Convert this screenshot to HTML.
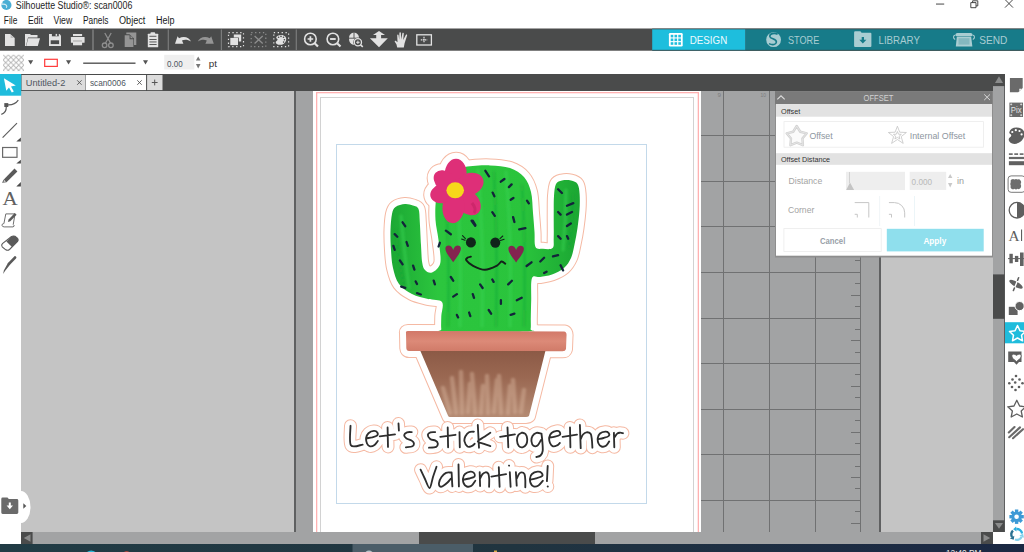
<!DOCTYPE html>
<html><head><meta charset="utf-8">
<style>
*{margin:0;padding:0}
html,body{width:1024px;height:552px;overflow:hidden;background:#fff}
svg{position:absolute;left:0;top:0;font-family:"Liberation Sans",sans-serif}
</style></head><body>
<svg width="1024" height="552" viewBox="0 0 1024 552">
<!-- canvas -->
<rect x="21" y="91" width="972" height="441" fill="#c4c4c4"/>
<rect x="294" y="91" width="2" height="441" fill="#5f6061"/>
<rect x="296" y="91" width="583" height="441" fill="#a2a3a4"/>
<rect x="879" y="91" width="2" height="441" fill="#5f6061"/>
<g fill="#707172"><rect x="723" y="91" width="1" height="441"/><rect x="769" y="91" width="1" height="441"/><rect x="815" y="91" width="1" height="441"/><rect x="860" y="91" width="1" height="441"/><rect x="701" y="135" width="160" height="1"/><rect x="701" y="181" width="160" height="1"/><rect x="701" y="226" width="160" height="1"/><rect x="701" y="272" width="160" height="1"/><rect x="701" y="318" width="160" height="1"/><rect x="701" y="363" width="160" height="1"/><rect x="701" y="409" width="160" height="1"/><rect x="701" y="454" width="160" height="1"/><rect x="701" y="500" width="160" height="1"/><rect x="855" y="101" width="6" height="1"/><rect x="851" y="112" width="10" height="1"/><rect x="855" y="124" width="6" height="1"/><rect x="855" y="146" width="6" height="1"/><rect x="851" y="158" width="10" height="1"/><rect x="855" y="169" width="6" height="1"/><rect x="855" y="192" width="6" height="1"/><rect x="851" y="204" width="10" height="1"/><rect x="855" y="215" width="6" height="1"/><rect x="855" y="238" width="6" height="1"/><rect x="851" y="249" width="10" height="1"/><rect x="855" y="260" width="6" height="1"/><rect x="855" y="283" width="6" height="1"/><rect x="851" y="295" width="10" height="1"/><rect x="855" y="306" width="6" height="1"/><rect x="855" y="329" width="6" height="1"/><rect x="851" y="340" width="10" height="1"/><rect x="855" y="352" width="6" height="1"/><rect x="855" y="374" width="6" height="1"/><rect x="851" y="386" width="10" height="1"/><rect x="855" y="397" width="6" height="1"/><rect x="855" y="420" width="6" height="1"/><rect x="851" y="432" width="10" height="1"/><rect x="855" y="443" width="6" height="1"/><rect x="855" y="466" width="6" height="1"/><rect x="851" y="477" width="10" height="1"/><rect x="855" y="488" width="6" height="1"/><rect x="855" y="511" width="6" height="1"/><rect x="851" y="523" width="10" height="1"/><rect x="855" y="534" width="6" height="1"/></g>
<text x="717.6" y="97.3" font-size="6" fill="#7c7d7e" textLength="3.5" lengthAdjust="spacingAndGlyphs">9</text>
<text x="760.6" y="97.3" font-size="6" fill="#7c7d7e" textLength="5.4" lengthAdjust="spacingAndGlyphs">10</text>
<rect x="313" y="91" width="388" height="441" fill="#fff"/>
<rect x="316" y="92" width="1.3" height="440" fill="#ffb2b2"/>
<rect x="316" y="92" width="383" height="1.3" fill="#ffb2b2"/>
<rect x="697.7" y="92" width="1.3" height="440" fill="#ffb2b2"/>
<rect x="320" y="97" width="1" height="435" fill="#d2d2d2"/>
<rect x="320" y="97" width="374" height="1" fill="#d2d2d2"/>
<rect x="693" y="97" width="1" height="435" fill="#d2d2d2"/>
<rect x="336.5" y="144.5" width="310" height="359" fill="none" stroke="#c3d9ea" stroke-width="1"/>
<!--ART-->
<!-- artwork -->
<defs>
<filter id="soft" x="-20%" y="-20%" width="140%" height="140%"><feGaussianBlur stdDeviation="1.1"/></filter>
<linearGradient id="gbody" x1="0" y1="0" x2="1" y2="0">
<stop offset="0" stop-color="#1ca834"/><stop offset="0.25" stop-color="#2cc63e"/><stop offset="0.7" stop-color="#2ac43c"/><stop offset="1" stop-color="#1ba633"/>
</linearGradient>
<linearGradient id="gpot" x1="0" y1="0" x2="0" y2="1">
<stop offset="0" stop-color="#8c5a46"/><stop offset="0.4" stop-color="#9a6852"/><stop offset="1" stop-color="#b48a72"/>
</linearGradient>
<linearGradient id="grim" x1="0" y1="0" x2="0" y2="1">
<stop offset="0" stop-color="#d27868"/><stop offset="0.5" stop-color="#dc8a78"/><stop offset="1" stop-color="#d07a68"/>
</linearGradient>
</defs>
<g id="cutline" fill="#f5b9a3" stroke="#f5b9a3" stroke-width="14" stroke-linejoin="round" stroke-linecap="round">
<path d="M444.0 331.5 C429.6 331.1 441.8 331.6 441.3 329.0 C440.9 326.4 441.2 320.5 441.3 316.0 C441.4 311.5 444.2 304.8 442.0 302.0 C439.8 299.2 433.0 300.3 428.0 299.0 C423.0 297.7 416.8 296.5 412.0 294.0 C407.2 291.5 402.2 288.3 399.0 284.0 C395.8 279.7 394.3 273.7 393.0 268.0 C391.7 262.3 391.4 256.3 391.0 250.0 C390.6 243.7 390.3 236.0 390.5 230.0 C390.7 224.0 391.2 217.8 392.0 214.0 C392.8 210.2 393.3 208.7 395.5 207.0 C397.7 205.3 402.1 204.2 405.0 204.0 C407.9 203.8 410.8 204.7 413.0 205.5 C415.2 206.3 417.4 206.2 418.5 209.0 C419.6 211.8 419.4 216.0 419.8 222.0 C420.2 228.0 420.6 238.2 421.0 245.0 C421.4 251.8 421.5 258.3 422.2 262.5 C422.9 266.7 423.4 268.3 425.0 270.0 C426.6 271.7 429.4 273.7 432.0 272.5 C434.6 271.3 439.2 268.4 440.3 263.0 C441.4 257.6 439.3 247.2 438.5 240.0 C437.7 232.8 435.9 226.7 435.5 220.0 C435.1 213.3 435.2 206.0 436.0 200.0 C436.8 194.0 437.8 188.7 440.0 184.0 C442.2 179.3 444.8 174.8 449.0 172.0 C453.2 169.2 458.2 168.1 465.0 167.0 C471.8 165.9 482.5 165.2 490.0 165.4 C497.5 165.6 504.3 166.1 510.0 168.0 C515.7 169.9 520.5 173.0 524.0 177.0 C527.5 181.0 529.5 186.0 531.0 192.0 C532.5 198.0 532.4 206.3 533.0 213.0 C533.6 219.7 534.1 226.3 534.5 232.0 C534.9 237.7 534.1 244.2 535.5 247.0 C536.9 249.8 540.1 248.6 543.0 248.8 C545.9 249.0 550.8 249.8 552.6 248.0 C554.4 246.2 553.5 243.5 553.7 238.0 C553.9 232.5 553.7 222.0 553.7 215.0 C553.8 208.0 553.6 201.2 554.0 196.0 C554.4 190.8 554.7 186.6 556.0 184.0 C557.3 181.4 559.5 181.1 562.0 180.5 C564.5 179.9 568.4 179.9 571.0 180.5 C573.6 181.1 576.1 181.8 577.5 184.0 C578.9 186.2 579.3 189.7 579.6 194.0 C579.9 198.3 579.9 204.3 579.5 210.0 C579.1 215.7 578.3 222.3 577.5 228.0 C576.7 233.7 575.7 239.0 574.6 244.0 C573.5 249.0 572.8 254.0 571.0 258.0 C569.2 262.0 567.2 265.2 564.0 268.0 C560.8 270.8 556.0 273.0 552.0 274.5 C548.0 276.0 543.3 276.4 540.0 277.0 C536.7 277.6 533.5 274.2 532.0 278.0 C530.5 281.8 531.4 293.3 531.2 300.0 C531.0 306.7 530.9 313.2 530.8 318.0 C530.7 322.8 531.1 326.8 530.6 329.0 C530.1 331.2 542.4 331.1 528.0 331.5 C513.6 331.9 458.4 331.9 444.0 331.5 Z"/><ellipse cx="455.7" cy="174.2" rx="15.5" ry="11.0" transform="rotate(-88.1 455.7 174.2)"/><ellipse cx="469.3" cy="184.4" rx="14.7" ry="11.0" transform="rotate(-22.6 469.3 184.4)"/><ellipse cx="467.1" cy="201.7" rx="15.8" ry="11.0" transform="rotate(44.0 467.1 201.7)"/><ellipse cx="453.5" cy="207.0" rx="16.2" ry="11.0" transform="rotate(95.9 453.5 207.0)"/><ellipse cx="442.6" cy="193.5" rx="12.5" ry="9.5" transform="rotate(165.9 442.6 193.5)"/><ellipse cx="445.2" cy="181.4" rx="12.9" ry="9.5" transform="rotate(-138.3 445.2 181.4)"/><path d="M406 333 Q405.5 331 408 331 L564 331.5 Q567 332 566.5 336 L566 349 Q565.5 351.5 562 351.3 L409 351 Q406.5 351 406.3 348 Z"/><path d="M420.4 351 L545.4 351 L529 416 Q528 417 526 417 L450 417 Q448.5 417 448 415.5 Z"/>
</g>
<g fill="#fff" stroke="#fff" stroke-width="12" stroke-linejoin="round" stroke-linecap="round">
<path d="M444.0 331.5 C429.6 331.1 441.8 331.6 441.3 329.0 C440.9 326.4 441.2 320.5 441.3 316.0 C441.4 311.5 444.2 304.8 442.0 302.0 C439.8 299.2 433.0 300.3 428.0 299.0 C423.0 297.7 416.8 296.5 412.0 294.0 C407.2 291.5 402.2 288.3 399.0 284.0 C395.8 279.7 394.3 273.7 393.0 268.0 C391.7 262.3 391.4 256.3 391.0 250.0 C390.6 243.7 390.3 236.0 390.5 230.0 C390.7 224.0 391.2 217.8 392.0 214.0 C392.8 210.2 393.3 208.7 395.5 207.0 C397.7 205.3 402.1 204.2 405.0 204.0 C407.9 203.8 410.8 204.7 413.0 205.5 C415.2 206.3 417.4 206.2 418.5 209.0 C419.6 211.8 419.4 216.0 419.8 222.0 C420.2 228.0 420.6 238.2 421.0 245.0 C421.4 251.8 421.5 258.3 422.2 262.5 C422.9 266.7 423.4 268.3 425.0 270.0 C426.6 271.7 429.4 273.7 432.0 272.5 C434.6 271.3 439.2 268.4 440.3 263.0 C441.4 257.6 439.3 247.2 438.5 240.0 C437.7 232.8 435.9 226.7 435.5 220.0 C435.1 213.3 435.2 206.0 436.0 200.0 C436.8 194.0 437.8 188.7 440.0 184.0 C442.2 179.3 444.8 174.8 449.0 172.0 C453.2 169.2 458.2 168.1 465.0 167.0 C471.8 165.9 482.5 165.2 490.0 165.4 C497.5 165.6 504.3 166.1 510.0 168.0 C515.7 169.9 520.5 173.0 524.0 177.0 C527.5 181.0 529.5 186.0 531.0 192.0 C532.5 198.0 532.4 206.3 533.0 213.0 C533.6 219.7 534.1 226.3 534.5 232.0 C534.9 237.7 534.1 244.2 535.5 247.0 C536.9 249.8 540.1 248.6 543.0 248.8 C545.9 249.0 550.8 249.8 552.6 248.0 C554.4 246.2 553.5 243.5 553.7 238.0 C553.9 232.5 553.7 222.0 553.7 215.0 C553.8 208.0 553.6 201.2 554.0 196.0 C554.4 190.8 554.7 186.6 556.0 184.0 C557.3 181.4 559.5 181.1 562.0 180.5 C564.5 179.9 568.4 179.9 571.0 180.5 C573.6 181.1 576.1 181.8 577.5 184.0 C578.9 186.2 579.3 189.7 579.6 194.0 C579.9 198.3 579.9 204.3 579.5 210.0 C579.1 215.7 578.3 222.3 577.5 228.0 C576.7 233.7 575.7 239.0 574.6 244.0 C573.5 249.0 572.8 254.0 571.0 258.0 C569.2 262.0 567.2 265.2 564.0 268.0 C560.8 270.8 556.0 273.0 552.0 274.5 C548.0 276.0 543.3 276.4 540.0 277.0 C536.7 277.6 533.5 274.2 532.0 278.0 C530.5 281.8 531.4 293.3 531.2 300.0 C531.0 306.7 530.9 313.2 530.8 318.0 C530.7 322.8 531.1 326.8 530.6 329.0 C530.1 331.2 542.4 331.1 528.0 331.5 C513.6 331.9 458.4 331.9 444.0 331.5 Z"/><ellipse cx="455.7" cy="174.2" rx="15.5" ry="11.0" transform="rotate(-88.1 455.7 174.2)"/><ellipse cx="469.3" cy="184.4" rx="14.7" ry="11.0" transform="rotate(-22.6 469.3 184.4)"/><ellipse cx="467.1" cy="201.7" rx="15.8" ry="11.0" transform="rotate(44.0 467.1 201.7)"/><ellipse cx="453.5" cy="207.0" rx="16.2" ry="11.0" transform="rotate(95.9 453.5 207.0)"/><ellipse cx="442.6" cy="193.5" rx="12.5" ry="9.5" transform="rotate(165.9 442.6 193.5)"/><ellipse cx="445.2" cy="181.4" rx="12.9" ry="9.5" transform="rotate(-138.3 445.2 181.4)"/><path d="M406 333 Q405.5 331 408 331 L564 331.5 Q567 332 566.5 336 L566 349 Q565.5 351.5 562 351.3 L409 351 Q406.5 351 406.3 348 Z"/><path d="M420.4 351 L545.4 351 L529 416 Q528 417 526 417 L450 417 Q448.5 417 448 415.5 Z"/>
</g>
<g fill="none" stroke-linecap="round" stroke-linejoin="round">
<path d="M350.5 425.8 C350.6 429.1 348.9 442.2 350.9 445.3 C352.9 448.4 360.7 444.7 362.6 444.6 M366.9 438.3 C367.8 438.1 370.3 437.8 372.0 437.4 C373.7 436.9 376.1 436.4 377.0 435.6 C377.9 434.8 377.8 433.3 377.3 432.5 C376.8 431.7 375.4 430.8 373.9 430.9 C372.4 431.0 369.8 432.0 368.5 433.2 C367.2 434.4 366.4 436.3 366.1 438.0 C365.9 439.7 366.4 442.1 367.0 443.5 C367.6 444.9 368.8 446.1 370.0 446.3 C371.2 446.6 373.2 445.9 374.5 445.0 C375.8 444.1 377.2 441.7 377.8 441.0 M387.6 427.4 L388.0 446.9 M379.8 436.4 L395.0 434.4 M398.5 423.5 L398.9 430.5 M411.8 432.1 C411.0 432.1 408.3 431.8 407.0 432.3 C405.7 432.8 404.3 433.9 404.2 435.0 C404.1 436.1 405.3 437.7 406.5 438.6 C407.7 439.5 410.3 439.8 411.5 440.5 C412.7 441.2 413.6 442.0 413.8 443.0 C414.0 444.0 413.8 445.6 412.5 446.3 C411.2 447.0 407.0 447.1 405.9 447.3 M435.2 432.1 C434.4 432.1 431.7 431.9 430.5 432.3 C429.3 432.8 427.9 433.7 427.8 434.8 C427.8 435.9 428.9 438.1 430.2 439.1 C431.5 440.1 434.2 439.9 435.5 440.6 C436.8 441.3 437.7 442.5 437.8 443.5 C437.9 444.5 437.7 446.1 436.2 446.8 C434.7 447.5 430.2 447.6 429.0 447.7 M447.7 427.4 L448.1 447.3 M440.3 436.8 L455.5 434.8 M459.5 432.1 L459.8 447.3 M473.9 431.7 C473.1 431.8 470.4 431.4 469.0 432.2 C467.6 433.0 466.1 435.0 465.3 436.5 C464.6 438.0 464.1 439.7 464.5 441.4 C464.9 443.1 466.3 445.7 467.5 446.5 C468.7 447.3 470.3 446.6 471.5 446.2 C472.7 445.8 474.2 444.2 474.7 443.8 M477.8 425.0 L479.0 447.7 M490.3 432.8 C489.2 433.5 486.1 435.6 484.0 437.0 C481.9 438.4 477.8 440.3 477.8 441.4 C477.8 442.5 481.9 443.0 484.0 443.8 C486.1 444.6 489.2 445.7 490.3 446.1 M507.5 427.4 L508.3 447.3 M500.1 436.8 L514.9 434.4 M522.0 432.6 C521.4 433.0 519.0 433.9 518.2 435.2 C517.4 436.5 516.9 438.7 517.0 440.5 C517.1 442.3 517.9 444.9 518.8 446.0 C519.7 447.1 521.3 447.6 522.5 447.3 C523.7 447.1 525.4 445.9 526.2 444.5 C527.0 443.1 527.3 440.8 527.2 439.0 C527.1 437.2 526.4 435.1 525.5 434.0 C524.6 432.9 522.6 432.8 522.0 432.6 M541.5 433.6 C540.7 433.5 538.0 432.4 536.5 432.8 C535.0 433.2 533.3 434.6 532.5 436.0 C531.7 437.4 531.3 439.9 531.5 441.5 C531.7 443.1 532.5 445.1 533.5 445.8 C534.5 446.5 536.2 446.5 537.5 445.5 C538.8 444.5 540.4 440.9 541.0 440.0 M541.5 433.6 C541.6 434.8 542.1 438.1 542.3 441.0 C542.5 443.9 543.0 448.4 542.7 450.8 C542.4 453.2 541.5 454.5 540.5 455.5 C539.5 456.5 537.1 456.8 536.4 457.0 M549.7 437.5 C550.6 437.4 553.3 437.1 555.0 436.6 C556.7 436.2 559.0 435.6 559.8 434.8 C560.5 434.0 560.0 432.5 559.5 431.8 C559.0 431.1 558.0 430.7 556.7 430.9 C555.4 431.1 552.8 431.9 551.5 433.0 C550.2 434.1 549.5 435.8 549.2 437.5 C549.0 439.2 549.4 441.5 550.0 443.0 C550.6 444.5 551.8 445.9 553.0 446.3 C554.2 446.7 556.1 445.9 557.2 445.3 C558.3 444.8 559.4 443.4 559.8 443.0 M570.0 427.4 L570.4 447.3 M562.6 436.8 L577.0 434.6 M579.9 425.0 L580.7 448.1 M580.7 439.1 C581.1 438.3 582.0 435.6 583.0 434.5 C584.0 433.4 585.2 432.4 586.5 432.3 C587.8 432.2 589.6 432.5 590.5 433.6 C591.4 434.7 591.5 436.6 591.8 439.0 C592.1 441.4 592.3 446.2 592.4 447.7 M598.3 439.1 C599.2 438.9 601.8 438.5 603.5 438.0 C605.2 437.5 607.9 436.9 608.7 436.0 C609.5 435.1 609.1 433.5 608.5 432.8 C607.9 432.1 606.7 431.6 605.3 431.7 C603.9 431.8 601.2 432.4 600.0 433.5 C598.8 434.6 598.0 436.3 597.8 438.0 C597.5 439.7 597.9 442.1 598.5 443.5 C599.1 444.9 600.2 446.1 601.5 446.5 C602.8 446.9 604.7 446.7 606.0 445.8 C607.3 444.9 608.7 442.1 609.2 441.4 M613.9 432.8 L614.3 447.3 M614.3 437.5 C614.8 436.9 616.2 434.4 617.2 433.6 C618.2 432.8 619.0 432.8 620.0 432.7 C621.0 432.6 622.4 433.1 622.9 433.2 M420.6 469.7 C421.3 471.2 423.5 475.9 425.0 479.0 C426.5 482.1 428.3 488.3 429.6 488.0 C430.9 487.7 431.9 480.5 433.0 477.0 C434.1 473.5 435.9 468.5 436.5 466.8 M450.8 472.5 C450.0 472.6 447.6 472.1 446.0 472.8 C444.4 473.6 442.7 475.3 441.5 477.0 C440.3 478.7 439.2 481.4 439.0 483.0 C438.8 484.6 439.3 486.0 440.0 486.5 C440.7 487.0 441.8 486.7 443.0 486.0 C444.2 485.3 446.2 483.7 447.5 482.5 C448.8 481.3 450.2 479.3 450.8 478.7 M451.6 472.5 C451.7 473.8 451.9 477.7 452.0 480.0 C452.1 482.3 452.3 485.3 452.4 486.4 M458.5 464.4 L458.9 486.4 M464.2 479.5 C465.1 479.3 467.8 479.0 469.5 478.5 C471.2 478.0 473.6 477.5 474.4 476.6 C475.1 475.7 474.7 473.8 474.0 473.0 C473.3 472.2 471.9 471.5 470.4 471.7 C468.9 471.9 466.2 472.9 465.0 474.0 C463.8 475.1 463.2 476.9 463.0 478.5 C462.8 480.1 463.2 482.2 463.8 483.5 C464.4 484.8 465.5 486.1 466.8 486.5 C468.1 486.9 470.1 486.8 471.5 485.8 C472.9 484.9 474.7 481.6 475.3 480.8 M479.7 472.1 L480.1 486.0 M480.1 478.7 C480.5 477.9 481.6 475.3 482.5 474.2 C483.4 473.1 484.5 472.4 485.5 472.3 C486.5 472.2 487.7 472.7 488.3 473.8 C488.9 474.9 489.1 476.8 489.2 479.0 C489.3 481.2 489.1 485.5 489.1 486.8 M498.8 467.2 L499.6 486.8 M491.4 476.6 L506.1 474.2 M509.0 465.6 L509.1 465.7 M509.8 472.1 L510.6 486.8 M515.9 472.1 L516.7 485.6 M516.7 478.7 C517.1 477.9 518.2 475.1 519.0 474.0 C519.8 472.9 520.6 472.4 521.5 472.4 C522.4 472.4 523.9 472.9 524.5 474.2 C525.1 475.5 525.2 477.8 525.3 480.0 C525.4 482.2 525.3 486.0 525.3 487.2 M530.6 479.5 C531.5 479.3 534.1 478.9 536.0 478.3 C537.9 477.8 541.1 477.1 542.0 476.2 C542.9 475.3 542.2 473.6 541.5 472.8 C540.8 472.1 539.1 471.5 537.5 471.7 C535.9 471.9 533.2 472.9 532.0 474.0 C530.8 475.1 530.2 476.9 530.0 478.5 C529.8 480.1 530.2 482.2 530.8 483.5 C531.4 484.8 532.2 486.1 533.5 486.4 C534.8 486.7 537.0 486.4 538.5 485.5 C540.0 484.6 542.1 481.6 542.8 480.8 M547.7 466.0 C547.6 467.3 547.4 471.5 547.3 474.0 C547.2 476.5 547.0 479.9 546.9 481.1 M547.7 486.4 L547.8 486.5" stroke="#f5b9a3" stroke-width="13"/>
<path d="M350.5 425.8 C350.6 429.1 348.9 442.2 350.9 445.3 C352.9 448.4 360.7 444.7 362.6 444.6 M366.9 438.3 C367.8 438.1 370.3 437.8 372.0 437.4 C373.7 436.9 376.1 436.4 377.0 435.6 C377.9 434.8 377.8 433.3 377.3 432.5 C376.8 431.7 375.4 430.8 373.9 430.9 C372.4 431.0 369.8 432.0 368.5 433.2 C367.2 434.4 366.4 436.3 366.1 438.0 C365.9 439.7 366.4 442.1 367.0 443.5 C367.6 444.9 368.8 446.1 370.0 446.3 C371.2 446.6 373.2 445.9 374.5 445.0 C375.8 444.1 377.2 441.7 377.8 441.0 M387.6 427.4 L388.0 446.9 M379.8 436.4 L395.0 434.4 M398.5 423.5 L398.9 430.5 M411.8 432.1 C411.0 432.1 408.3 431.8 407.0 432.3 C405.7 432.8 404.3 433.9 404.2 435.0 C404.1 436.1 405.3 437.7 406.5 438.6 C407.7 439.5 410.3 439.8 411.5 440.5 C412.7 441.2 413.6 442.0 413.8 443.0 C414.0 444.0 413.8 445.6 412.5 446.3 C411.2 447.0 407.0 447.1 405.9 447.3 M435.2 432.1 C434.4 432.1 431.7 431.9 430.5 432.3 C429.3 432.8 427.9 433.7 427.8 434.8 C427.8 435.9 428.9 438.1 430.2 439.1 C431.5 440.1 434.2 439.9 435.5 440.6 C436.8 441.3 437.7 442.5 437.8 443.5 C437.9 444.5 437.7 446.1 436.2 446.8 C434.7 447.5 430.2 447.6 429.0 447.7 M447.7 427.4 L448.1 447.3 M440.3 436.8 L455.5 434.8 M459.5 432.1 L459.8 447.3 M473.9 431.7 C473.1 431.8 470.4 431.4 469.0 432.2 C467.6 433.0 466.1 435.0 465.3 436.5 C464.6 438.0 464.1 439.7 464.5 441.4 C464.9 443.1 466.3 445.7 467.5 446.5 C468.7 447.3 470.3 446.6 471.5 446.2 C472.7 445.8 474.2 444.2 474.7 443.8 M477.8 425.0 L479.0 447.7 M490.3 432.8 C489.2 433.5 486.1 435.6 484.0 437.0 C481.9 438.4 477.8 440.3 477.8 441.4 C477.8 442.5 481.9 443.0 484.0 443.8 C486.1 444.6 489.2 445.7 490.3 446.1 M507.5 427.4 L508.3 447.3 M500.1 436.8 L514.9 434.4 M522.0 432.6 C521.4 433.0 519.0 433.9 518.2 435.2 C517.4 436.5 516.9 438.7 517.0 440.5 C517.1 442.3 517.9 444.9 518.8 446.0 C519.7 447.1 521.3 447.6 522.5 447.3 C523.7 447.1 525.4 445.9 526.2 444.5 C527.0 443.1 527.3 440.8 527.2 439.0 C527.1 437.2 526.4 435.1 525.5 434.0 C524.6 432.9 522.6 432.8 522.0 432.6 M541.5 433.6 C540.7 433.5 538.0 432.4 536.5 432.8 C535.0 433.2 533.3 434.6 532.5 436.0 C531.7 437.4 531.3 439.9 531.5 441.5 C531.7 443.1 532.5 445.1 533.5 445.8 C534.5 446.5 536.2 446.5 537.5 445.5 C538.8 444.5 540.4 440.9 541.0 440.0 M541.5 433.6 C541.6 434.8 542.1 438.1 542.3 441.0 C542.5 443.9 543.0 448.4 542.7 450.8 C542.4 453.2 541.5 454.5 540.5 455.5 C539.5 456.5 537.1 456.8 536.4 457.0 M549.7 437.5 C550.6 437.4 553.3 437.1 555.0 436.6 C556.7 436.2 559.0 435.6 559.8 434.8 C560.5 434.0 560.0 432.5 559.5 431.8 C559.0 431.1 558.0 430.7 556.7 430.9 C555.4 431.1 552.8 431.9 551.5 433.0 C550.2 434.1 549.5 435.8 549.2 437.5 C549.0 439.2 549.4 441.5 550.0 443.0 C550.6 444.5 551.8 445.9 553.0 446.3 C554.2 446.7 556.1 445.9 557.2 445.3 C558.3 444.8 559.4 443.4 559.8 443.0 M570.0 427.4 L570.4 447.3 M562.6 436.8 L577.0 434.6 M579.9 425.0 L580.7 448.1 M580.7 439.1 C581.1 438.3 582.0 435.6 583.0 434.5 C584.0 433.4 585.2 432.4 586.5 432.3 C587.8 432.2 589.6 432.5 590.5 433.6 C591.4 434.7 591.5 436.6 591.8 439.0 C592.1 441.4 592.3 446.2 592.4 447.7 M598.3 439.1 C599.2 438.9 601.8 438.5 603.5 438.0 C605.2 437.5 607.9 436.9 608.7 436.0 C609.5 435.1 609.1 433.5 608.5 432.8 C607.9 432.1 606.7 431.6 605.3 431.7 C603.9 431.8 601.2 432.4 600.0 433.5 C598.8 434.6 598.0 436.3 597.8 438.0 C597.5 439.7 597.9 442.1 598.5 443.5 C599.1 444.9 600.2 446.1 601.5 446.5 C602.8 446.9 604.7 446.7 606.0 445.8 C607.3 444.9 608.7 442.1 609.2 441.4 M613.9 432.8 L614.3 447.3 M614.3 437.5 C614.8 436.9 616.2 434.4 617.2 433.6 C618.2 432.8 619.0 432.8 620.0 432.7 C621.0 432.6 622.4 433.1 622.9 433.2 M420.6 469.7 C421.3 471.2 423.5 475.9 425.0 479.0 C426.5 482.1 428.3 488.3 429.6 488.0 C430.9 487.7 431.9 480.5 433.0 477.0 C434.1 473.5 435.9 468.5 436.5 466.8 M450.8 472.5 C450.0 472.6 447.6 472.1 446.0 472.8 C444.4 473.6 442.7 475.3 441.5 477.0 C440.3 478.7 439.2 481.4 439.0 483.0 C438.8 484.6 439.3 486.0 440.0 486.5 C440.7 487.0 441.8 486.7 443.0 486.0 C444.2 485.3 446.2 483.7 447.5 482.5 C448.8 481.3 450.2 479.3 450.8 478.7 M451.6 472.5 C451.7 473.8 451.9 477.7 452.0 480.0 C452.1 482.3 452.3 485.3 452.4 486.4 M458.5 464.4 L458.9 486.4 M464.2 479.5 C465.1 479.3 467.8 479.0 469.5 478.5 C471.2 478.0 473.6 477.5 474.4 476.6 C475.1 475.7 474.7 473.8 474.0 473.0 C473.3 472.2 471.9 471.5 470.4 471.7 C468.9 471.9 466.2 472.9 465.0 474.0 C463.8 475.1 463.2 476.9 463.0 478.5 C462.8 480.1 463.2 482.2 463.8 483.5 C464.4 484.8 465.5 486.1 466.8 486.5 C468.1 486.9 470.1 486.8 471.5 485.8 C472.9 484.9 474.7 481.6 475.3 480.8 M479.7 472.1 L480.1 486.0 M480.1 478.7 C480.5 477.9 481.6 475.3 482.5 474.2 C483.4 473.1 484.5 472.4 485.5 472.3 C486.5 472.2 487.7 472.7 488.3 473.8 C488.9 474.9 489.1 476.8 489.2 479.0 C489.3 481.2 489.1 485.5 489.1 486.8 M498.8 467.2 L499.6 486.8 M491.4 476.6 L506.1 474.2 M509.0 465.6 L509.1 465.7 M509.8 472.1 L510.6 486.8 M515.9 472.1 L516.7 485.6 M516.7 478.7 C517.1 477.9 518.2 475.1 519.0 474.0 C519.8 472.9 520.6 472.4 521.5 472.4 C522.4 472.4 523.9 472.9 524.5 474.2 C525.1 475.5 525.2 477.8 525.3 480.0 C525.4 482.2 525.3 486.0 525.3 487.2 M530.6 479.5 C531.5 479.3 534.1 478.9 536.0 478.3 C537.9 477.8 541.1 477.1 542.0 476.2 C542.9 475.3 542.2 473.6 541.5 472.8 C540.8 472.1 539.1 471.5 537.5 471.7 C535.9 471.9 533.2 472.9 532.0 474.0 C530.8 475.1 530.2 476.9 530.0 478.5 C529.8 480.1 530.2 482.2 530.8 483.5 C531.4 484.8 532.2 486.1 533.5 486.4 C534.8 486.7 537.0 486.4 538.5 485.5 C540.0 484.6 542.1 481.6 542.8 480.8 M547.7 466.0 C547.6 467.3 547.4 471.5 547.3 474.0 C547.2 476.5 547.0 479.9 546.9 481.1 M547.7 486.4 L547.8 486.5" stroke="#fff" stroke-width="11"/>
</g>
<path d="M444.0 331.5 C429.6 331.1 441.8 331.6 441.3 329.0 C440.9 326.4 441.2 320.5 441.3 316.0 C441.4 311.5 444.2 304.8 442.0 302.0 C439.8 299.2 433.0 300.3 428.0 299.0 C423.0 297.7 416.8 296.5 412.0 294.0 C407.2 291.5 402.2 288.3 399.0 284.0 C395.8 279.7 394.3 273.7 393.0 268.0 C391.7 262.3 391.4 256.3 391.0 250.0 C390.6 243.7 390.3 236.0 390.5 230.0 C390.7 224.0 391.2 217.8 392.0 214.0 C392.8 210.2 393.3 208.7 395.5 207.0 C397.7 205.3 402.1 204.2 405.0 204.0 C407.9 203.8 410.8 204.7 413.0 205.5 C415.2 206.3 417.4 206.2 418.5 209.0 C419.6 211.8 419.4 216.0 419.8 222.0 C420.2 228.0 420.6 238.2 421.0 245.0 C421.4 251.8 421.5 258.3 422.2 262.5 C422.9 266.7 423.4 268.3 425.0 270.0 C426.6 271.7 429.4 273.7 432.0 272.5 C434.6 271.3 439.2 268.4 440.3 263.0 C441.4 257.6 439.3 247.2 438.5 240.0 C437.7 232.8 435.9 226.7 435.5 220.0 C435.1 213.3 435.2 206.0 436.0 200.0 C436.8 194.0 437.8 188.7 440.0 184.0 C442.2 179.3 444.8 174.8 449.0 172.0 C453.2 169.2 458.2 168.1 465.0 167.0 C471.8 165.9 482.5 165.2 490.0 165.4 C497.5 165.6 504.3 166.1 510.0 168.0 C515.7 169.9 520.5 173.0 524.0 177.0 C527.5 181.0 529.5 186.0 531.0 192.0 C532.5 198.0 532.4 206.3 533.0 213.0 C533.6 219.7 534.1 226.3 534.5 232.0 C534.9 237.7 534.1 244.2 535.5 247.0 C536.9 249.8 540.1 248.6 543.0 248.8 C545.9 249.0 550.8 249.8 552.6 248.0 C554.4 246.2 553.5 243.5 553.7 238.0 C553.9 232.5 553.7 222.0 553.7 215.0 C553.8 208.0 553.6 201.2 554.0 196.0 C554.4 190.8 554.7 186.6 556.0 184.0 C557.3 181.4 559.5 181.1 562.0 180.5 C564.5 179.9 568.4 179.9 571.0 180.5 C573.6 181.1 576.1 181.8 577.5 184.0 C578.9 186.2 579.3 189.7 579.6 194.0 C579.9 198.3 579.9 204.3 579.5 210.0 C579.1 215.7 578.3 222.3 577.5 228.0 C576.7 233.7 575.7 239.0 574.6 244.0 C573.5 249.0 572.8 254.0 571.0 258.0 C569.2 262.0 567.2 265.2 564.0 268.0 C560.8 270.8 556.0 273.0 552.0 274.5 C548.0 276.0 543.3 276.4 540.0 277.0 C536.7 277.6 533.5 274.2 532.0 278.0 C530.5 281.8 531.4 293.3 531.2 300.0 C531.0 306.7 530.9 313.2 530.8 318.0 C530.7 322.8 531.1 326.8 530.6 329.0 C530.1 331.2 542.4 331.1 528.0 331.5 C513.6 331.9 458.4 331.9 444.0 331.5 Z" fill="url(#gbody)"/>
<g filter="url(#soft)" fill="none" stroke-linecap="round">
<path d="M456 178 Q462 240 460 326 M478 170 Q484 240 482 326 M506 172 Q512 240 510 326 M401 216 Q404 250 409 288 M566 190 Q566 220 563 250" stroke="#3ad454" stroke-width="3.2" opacity="0.5"/>
<path d="M446 200 Q450 260 448 326 M494 172 Q498 250 496 326 M522 185 Q526 250 524 326 M396 230 Q398 260 404 285 M573 195 Q572 225 569 248" stroke="#129a30" stroke-width="2.6" opacity="0.35"/>
</g>
<path d="M406 333 Q405.5 331 408 331 L564 331.5 Q567 332 566.5 336 L566 349 Q565.5 351.5 562 351.3 L409 351 Q406.5 351 406.3 348 Z" fill="url(#grim)"/>
<path d="M420.4 351 L545.4 351 L529 416 Q528 417 526 417 L450 417 Q448.5 417 448 415.5 Z" fill="url(#gpot)"/>
<path d="M450 413 L443 388 M456 413 L452 378 M462 413 L461 372 M468 412 L470 384 M475 413 L472 374 M481 413 L483 386 M488 413 L487 376 M494 412 L497 380 M501 413 L499 376 M508 413 L510 386 M515 412 L513 380 M521 412 L524 390" stroke="#d8b49c" stroke-width="4.5" opacity="0.45" stroke-linecap="round" filter="url(#soft)"/>
<g fill="#de2f78"><ellipse cx="455.7" cy="174.2" rx="15.5" ry="11.0" transform="rotate(-88.1 455.7 174.2)"/><ellipse cx="469.3" cy="184.4" rx="14.7" ry="11.0" transform="rotate(-22.6 469.3 184.4)"/><ellipse cx="467.1" cy="201.7" rx="15.8" ry="11.0" transform="rotate(44.0 467.1 201.7)"/><ellipse cx="453.5" cy="207.0" rx="16.2" ry="11.0" transform="rotate(95.9 453.5 207.0)"/><ellipse cx="442.6" cy="193.5" rx="12.5" ry="9.5" transform="rotate(165.9 442.6 193.5)"/><ellipse cx="445.2" cy="181.4" rx="12.9" ry="9.5" transform="rotate(-138.3 445.2 181.4)"/></g>
<path d="M472 203 Q477 209 474 213" stroke="#b81e5c" stroke-width="3" fill="none" opacity="0.45"/>
<ellipse cx="455.2" cy="190.3" rx="8.8" ry="8" fill="#f6d81a"/>
<path d="M471.6 220.8 L475.2 225.7 M445.9 230.6 L450.8 234.2 M492.3 212.2 L494.8 215.9 M513.1 217.1 L514.4 222 M519.2 229.3 L525.4 228.1 M439.8 242.8 L438.6 246.5 M526.6 266 L531.5 262.3 M450.8 277 L453.2 280.7 M480.1 284.4 L482.6 288 M492.3 279.5 L493.6 281.9 M508.2 284.4 L511.9 280.7 M453.2 296.6 L456.9 294.1 M472.8 294.1 L474 297.8 M500.9 300.2 L500.9 303.9 M516.8 300.2 L521.7 297.8 M469.1 312.5 L470.3 316.1 M488.7 310 L491.1 313.7 M510.7 314.9 L514.4 313.7 M433.7 280.7 L434.9 284.4 M456.9 314.9 L458.1 317.4 M402.6 222.3 L405.2 226.2 M394.7 234.1 L397.3 236.7 M406.5 242 L407.8 245.9 M393.4 245.9 L394.7 249.9 M399.9 260.4 L402.6 264.3 M413.1 265.6 L414.4 269.6 M401.2 286.6 L405.2 287.9 M415.7 281.4 L417 284 M417 293.2 L420.9 294.5 M558.1 189.2 L561.9 193 M567 205.7 L573.3 203.1 M558.1 212 L560.6 214.6 M567 214.6 L572 212 M567 226 L570.8 223.5 M558.1 236.1 L560.6 238.7 M567 236.1 L568.2 238.7 M540.3 261.5 L544.1 257.7 M553 256.4 L558.1 255.2 M560.6 265.3 L563.1 270.4 M544.1 273 L546.6 271.7 M485.4 170.8 L489 176.3 M500.8 181.7 L504.4 179 M508.9 187.1 L511.6 184.4 M492.6 192.6 L494.4 196.2 M510.7 199.8 L513.4 198 M527 200.7 L528.8 203.4 M472.7 220.7 L475.4 225.2" stroke="#13243a" stroke-width="2.3" stroke-linecap="round"/>
<ellipse cx="470.9" cy="242.4" rx="5" ry="5.2" fill="#10241a"/>
<ellipse cx="495.3" cy="242.6" rx="5" ry="5.2" fill="#10241a"/>
<path d="M465.4 238.6 L462.5 235.7 M465 240.3 L461.6 239.1 M500 238.6 L502.8 236 M500.5 240.5 L504.1 239.2" stroke="#10241a" stroke-width="1.1" stroke-linecap="round"/>
<path d="M453.2 262.2 C449.3 256.6 445.4 252.6 445.4 248.6 C445.4 244.6 451.6 243.8 453.2 249.9 C454.8 243.8 460.9 244.6 460.9 248.6 C460.9 252.6 457.1 256.6 453.2 262.2 Z" fill="#842450"/>
<path d="M516.1 262.4 C512.2 256.8 508.4 252.8 508.4 248.8 C508.4 244.8 514.6 244.0 516.1 250.1 C517.6 244.0 523.9 244.8 523.9 248.8 C523.9 252.8 520.0 256.8 516.1 262.4 Z" fill="#842450"/>
<path d="M470.9 256.7 C470.4 256.9 468.5 257.0 467.7 257.6 C466.9 258.2 465.4 258.9 466.3 260.3 C467.2 261.7 470.0 264.2 473.1 265.8 C476.2 267.4 481.0 269.8 484.9 269.8 C488.8 269.8 493.9 267.2 496.7 265.8 C499.5 264.4 500.1 261.8 501.5 261.5 C502.9 261.2 504.7 263.4 505.3 263.8" fill="none" stroke="#14201a" stroke-width="1.9" stroke-linecap="round"/>
<path d="M350.5 425.8 C350.6 429.1 348.9 442.2 350.9 445.3 C352.9 448.4 360.7 444.7 362.6 444.6 M366.9 438.3 C367.8 438.1 370.3 437.8 372.0 437.4 C373.7 436.9 376.1 436.4 377.0 435.6 C377.9 434.8 377.8 433.3 377.3 432.5 C376.8 431.7 375.4 430.8 373.9 430.9 C372.4 431.0 369.8 432.0 368.5 433.2 C367.2 434.4 366.4 436.3 366.1 438.0 C365.9 439.7 366.4 442.1 367.0 443.5 C367.6 444.9 368.8 446.1 370.0 446.3 C371.2 446.6 373.2 445.9 374.5 445.0 C375.8 444.1 377.2 441.7 377.8 441.0 M387.6 427.4 L388.0 446.9 M379.8 436.4 L395.0 434.4 M398.5 423.5 L398.9 430.5 M411.8 432.1 C411.0 432.1 408.3 431.8 407.0 432.3 C405.7 432.8 404.3 433.9 404.2 435.0 C404.1 436.1 405.3 437.7 406.5 438.6 C407.7 439.5 410.3 439.8 411.5 440.5 C412.7 441.2 413.6 442.0 413.8 443.0 C414.0 444.0 413.8 445.6 412.5 446.3 C411.2 447.0 407.0 447.1 405.9 447.3 M435.2 432.1 C434.4 432.1 431.7 431.9 430.5 432.3 C429.3 432.8 427.9 433.7 427.8 434.8 C427.8 435.9 428.9 438.1 430.2 439.1 C431.5 440.1 434.2 439.9 435.5 440.6 C436.8 441.3 437.7 442.5 437.8 443.5 C437.9 444.5 437.7 446.1 436.2 446.8 C434.7 447.5 430.2 447.6 429.0 447.7 M447.7 427.4 L448.1 447.3 M440.3 436.8 L455.5 434.8 M459.5 432.1 L459.8 447.3 M473.9 431.7 C473.1 431.8 470.4 431.4 469.0 432.2 C467.6 433.0 466.1 435.0 465.3 436.5 C464.6 438.0 464.1 439.7 464.5 441.4 C464.9 443.1 466.3 445.7 467.5 446.5 C468.7 447.3 470.3 446.6 471.5 446.2 C472.7 445.8 474.2 444.2 474.7 443.8 M477.8 425.0 L479.0 447.7 M490.3 432.8 C489.2 433.5 486.1 435.6 484.0 437.0 C481.9 438.4 477.8 440.3 477.8 441.4 C477.8 442.5 481.9 443.0 484.0 443.8 C486.1 444.6 489.2 445.7 490.3 446.1 M507.5 427.4 L508.3 447.3 M500.1 436.8 L514.9 434.4 M522.0 432.6 C521.4 433.0 519.0 433.9 518.2 435.2 C517.4 436.5 516.9 438.7 517.0 440.5 C517.1 442.3 517.9 444.9 518.8 446.0 C519.7 447.1 521.3 447.6 522.5 447.3 C523.7 447.1 525.4 445.9 526.2 444.5 C527.0 443.1 527.3 440.8 527.2 439.0 C527.1 437.2 526.4 435.1 525.5 434.0 C524.6 432.9 522.6 432.8 522.0 432.6 M541.5 433.6 C540.7 433.5 538.0 432.4 536.5 432.8 C535.0 433.2 533.3 434.6 532.5 436.0 C531.7 437.4 531.3 439.9 531.5 441.5 C531.7 443.1 532.5 445.1 533.5 445.8 C534.5 446.5 536.2 446.5 537.5 445.5 C538.8 444.5 540.4 440.9 541.0 440.0 M541.5 433.6 C541.6 434.8 542.1 438.1 542.3 441.0 C542.5 443.9 543.0 448.4 542.7 450.8 C542.4 453.2 541.5 454.5 540.5 455.5 C539.5 456.5 537.1 456.8 536.4 457.0 M549.7 437.5 C550.6 437.4 553.3 437.1 555.0 436.6 C556.7 436.2 559.0 435.6 559.8 434.8 C560.5 434.0 560.0 432.5 559.5 431.8 C559.0 431.1 558.0 430.7 556.7 430.9 C555.4 431.1 552.8 431.9 551.5 433.0 C550.2 434.1 549.5 435.8 549.2 437.5 C549.0 439.2 549.4 441.5 550.0 443.0 C550.6 444.5 551.8 445.9 553.0 446.3 C554.2 446.7 556.1 445.9 557.2 445.3 C558.3 444.8 559.4 443.4 559.8 443.0 M570.0 427.4 L570.4 447.3 M562.6 436.8 L577.0 434.6 M579.9 425.0 L580.7 448.1 M580.7 439.1 C581.1 438.3 582.0 435.6 583.0 434.5 C584.0 433.4 585.2 432.4 586.5 432.3 C587.8 432.2 589.6 432.5 590.5 433.6 C591.4 434.7 591.5 436.6 591.8 439.0 C592.1 441.4 592.3 446.2 592.4 447.7 M598.3 439.1 C599.2 438.9 601.8 438.5 603.5 438.0 C605.2 437.5 607.9 436.9 608.7 436.0 C609.5 435.1 609.1 433.5 608.5 432.8 C607.9 432.1 606.7 431.6 605.3 431.7 C603.9 431.8 601.2 432.4 600.0 433.5 C598.8 434.6 598.0 436.3 597.8 438.0 C597.5 439.7 597.9 442.1 598.5 443.5 C599.1 444.9 600.2 446.1 601.5 446.5 C602.8 446.9 604.7 446.7 606.0 445.8 C607.3 444.9 608.7 442.1 609.2 441.4 M613.9 432.8 L614.3 447.3 M614.3 437.5 C614.8 436.9 616.2 434.4 617.2 433.6 C618.2 432.8 619.0 432.8 620.0 432.7 C621.0 432.6 622.4 433.1 622.9 433.2 M420.6 469.7 C421.3 471.2 423.5 475.9 425.0 479.0 C426.5 482.1 428.3 488.3 429.6 488.0 C430.9 487.7 431.9 480.5 433.0 477.0 C434.1 473.5 435.9 468.5 436.5 466.8 M450.8 472.5 C450.0 472.6 447.6 472.1 446.0 472.8 C444.4 473.6 442.7 475.3 441.5 477.0 C440.3 478.7 439.2 481.4 439.0 483.0 C438.8 484.6 439.3 486.0 440.0 486.5 C440.7 487.0 441.8 486.7 443.0 486.0 C444.2 485.3 446.2 483.7 447.5 482.5 C448.8 481.3 450.2 479.3 450.8 478.7 M451.6 472.5 C451.7 473.8 451.9 477.7 452.0 480.0 C452.1 482.3 452.3 485.3 452.4 486.4 M458.5 464.4 L458.9 486.4 M464.2 479.5 C465.1 479.3 467.8 479.0 469.5 478.5 C471.2 478.0 473.6 477.5 474.4 476.6 C475.1 475.7 474.7 473.8 474.0 473.0 C473.3 472.2 471.9 471.5 470.4 471.7 C468.9 471.9 466.2 472.9 465.0 474.0 C463.8 475.1 463.2 476.9 463.0 478.5 C462.8 480.1 463.2 482.2 463.8 483.5 C464.4 484.8 465.5 486.1 466.8 486.5 C468.1 486.9 470.1 486.8 471.5 485.8 C472.9 484.9 474.7 481.6 475.3 480.8 M479.7 472.1 L480.1 486.0 M480.1 478.7 C480.5 477.9 481.6 475.3 482.5 474.2 C483.4 473.1 484.5 472.4 485.5 472.3 C486.5 472.2 487.7 472.7 488.3 473.8 C488.9 474.9 489.1 476.8 489.2 479.0 C489.3 481.2 489.1 485.5 489.1 486.8 M498.8 467.2 L499.6 486.8 M491.4 476.6 L506.1 474.2 M509.0 465.6 L509.1 465.7 M509.8 472.1 L510.6 486.8 M515.9 472.1 L516.7 485.6 M516.7 478.7 C517.1 477.9 518.2 475.1 519.0 474.0 C519.8 472.9 520.6 472.4 521.5 472.4 C522.4 472.4 523.9 472.9 524.5 474.2 C525.1 475.5 525.2 477.8 525.3 480.0 C525.4 482.2 525.3 486.0 525.3 487.2 M530.6 479.5 C531.5 479.3 534.1 478.9 536.0 478.3 C537.9 477.8 541.1 477.1 542.0 476.2 C542.9 475.3 542.2 473.6 541.5 472.8 C540.8 472.1 539.1 471.5 537.5 471.7 C535.9 471.9 533.2 472.9 532.0 474.0 C530.8 475.1 530.2 476.9 530.0 478.5 C529.8 480.1 530.2 482.2 530.8 483.5 C531.4 484.8 532.2 486.1 533.5 486.4 C534.8 486.7 537.0 486.4 538.5 485.5 C540.0 484.6 542.1 481.6 542.8 480.8 M547.7 466.0 C547.6 467.3 547.4 471.5 547.3 474.0 C547.2 476.5 547.0 479.9 546.9 481.1 M547.7 486.4 L547.8 486.5" fill="none" stroke="#2e2e2e" stroke-width="1.85" stroke-linecap="round" stroke-linejoin="round"/>
<!--/ART-->
<!--PANEL-->
<!-- offset panel -->
<rect x="775" y="91" width="218" height="166.5" fill="#8e8e8e"/>
<rect x="775" y="91.2" width="217.5" height="13" fill="#7a7a7a"/>
<rect x="776" y="104.2" width="216" height="151.5" fill="#fff"/>
<rect x="776" y="104.2" width="216" height="12.5" fill="#e2e2e2"/>
<rect x="776" y="153.2" width="216" height="11.6" fill="#e2e2e2"/>
<path d="M777.3 99.4 L781 95.8 L784.7 99.4" fill="none" stroke="#dcdcdc" stroke-width="1.1"/>
<text x="863.6" y="101" font-size="9.6" fill="#d2d2d2" textLength="29.7" lengthAdjust="spacingAndGlyphs">OFFSET</text>
<path d="M984.2 94.4 L990 100.1 M990 94.4 L984.2 100.1" stroke="#d8d8d8" stroke-width="1"/>
<text x="781" y="113.8" font-size="7.3" fill="#333" textLength="19.3" lengthAdjust="spacingAndGlyphs">Offset</text>
<text x="781" y="161.6" font-size="7.3" fill="#333" textLength="49" lengthAdjust="spacingAndGlyphs">Offset Distance</text>
<rect x="784" y="121.6" width="199.6" height="25.6" fill="none" stroke="#ececec" stroke-width="0.8"/>
<path d="M796.70 126.00 L800.23 131.75 L806.78 133.32 L802.41 138.45 L802.93 145.18 L796.70 142.60 L790.47 145.18 L790.99 138.45 L786.62 133.32 L793.17 131.75 Z" fill="#fbfbfb" stroke="#d2d2d2" stroke-width="2.4" stroke-linejoin="round"/>
<path d="M796.70 126.00 L800.23 131.75 L806.78 133.32 L802.41 138.45 L802.93 145.18 L796.70 142.60 L790.47 145.18 L790.99 138.45 L786.62 133.32 L793.17 131.75 Z" fill="none" stroke="#e6e6e6" stroke-width="0.9" stroke-linejoin="round"/>
<text x="809.4" y="138.7" font-size="9" fill="#8d96a0" textLength="23.2" lengthAdjust="spacingAndGlyphs">Offset</text>
<path d="M897.4 126.2 L899.7 132.2 L906.4 132.5 L901.2 136.6 L903.2 143.4 L897.4 139.5 L891.6 143.4 L893.6 136.6 L888.4 132.5 L895.1 132.2 Z" fill="none" stroke="#c4c4c4" stroke-width="0.8"/>
<path d="M897.4 131.5 L898.5 134.2 L901.3 134.4 L899.1 136.2 L899.9 139 L897.4 137.4 L894.9 139 L895.7 136.2 L893.5 134.4 L896.3 134.2 Z" fill="none" stroke="#c4c4c4" stroke-width="0.8"/>
<text x="909.7" y="138.7" font-size="9" fill="#8d96a0" textLength="55.6" lengthAdjust="spacingAndGlyphs">Internal Offset</text>
<g fill="#a4a4a4" font-size="9.6">
<text x="788.5" y="183.9" textLength="33.7" lengthAdjust="spacingAndGlyphs">Distance</text>
<text x="788" y="212.9" textLength="26.3" lengthAdjust="spacingAndGlyphs">Corner</text>
<text x="957" y="183.9" textLength="7" lengthAdjust="spacingAndGlyphs" fill="#9a9a9a">in</text>
</g>
<rect x="846" y="171.8" width="59" height="18.3" fill="#eeeeee"/>
<rect x="849.3" y="172" width="0.7" height="11" fill="#c4c4c4"/>
<path d="M846.2 190 L850 182.5 L854.1 190 Z" fill="#c4c4c4"/>
<rect x="909.7" y="171.8" width="36.5" height="18.1" fill="#eeeeee"/>
<text x="911.6" y="184.9" font-size="9" fill="#b8b8b8" textLength="20.4" lengthAdjust="spacingAndGlyphs">0.000</text>
<path d="M948 177.9 L950.2 174 L952.4 177.9 Z M948 183 L950.2 187.4 L952.4 183 Z" fill="#c8c8c8"/>
<g fill="none" stroke="#c6c6c6" stroke-width="1">
<path d="M854.7 202.6 H868.8 V217.5"/>
<path d="M854.7 214.3 H857.3 V217.5"/>
<path d="M888.9 202.6 H894.5 A10.2 10.2 0 0 1 904.7 212.8 V217.5"/>
<path d="M888.9 214.3 H891.5 V217.5"/>
</g>
<rect x="879.5" y="196" width="0.6" height="30" fill="#e6eef2"/>
<rect x="914.3" y="196" width="0.6" height="30" fill="#e0eef4"/>
<rect x="783.9" y="228.6" width="97.3" height="22.9" fill="#fff" stroke="#ececec" stroke-width="0.8"/>
<text x="820" y="243.6" font-size="8.2" font-weight="bold" fill="#98a0a8" textLength="25.3" lengthAdjust="spacingAndGlyphs">Cancel</text>
<rect x="886.8" y="228.8" width="96.9" height="22.6" fill="#8fdfed"/>
<text x="923.4" y="244" font-size="8.4" font-weight="bold" fill="#fff" textLength="22.8" lengthAdjust="spacingAndGlyphs">Apply</text>

<!-- scrollbars -->
<rect x="21" y="532" width="972" height="12" fill="#a2a3a4"/>
<rect x="993" y="74" width="11" height="458" fill="#a2a3a4"/>
<rect x="1004" y="74" width="1" height="458" fill="#5f6061"/>
<!--SCROLL-->
<!-- top chrome -->
<rect x="0" y="28.5" width="1024" height="22.2" fill="#4a4b4b"/>
<rect x="21" y="74" width="972" height="17" fill="#4a4b4b"/>
<!--TOP-->
<!-- title -->
<circle cx="6.4" cy="5" r="5.1" fill="#4aaed4"/>
<path d="M0.8 1.8 Q2.2 0 3.2 -0.5 L0.8 -0.5 Z M1 3.2 Q1.5 2.2 2.4 1.6 Q2 3 3 3.6" fill="#fff"/>
<path d="M1.3 4.4 Q4.6 3.6 6.5 5.4 Q7.2 6.6 6.2 7.8" fill="none" stroke="#d2ecf5" stroke-width="1.1"/>
<text x="15.8" y="8.5" font-size="10" fill="#1e1e1e" textLength="116.5" lengthAdjust="spacingAndGlyphs">Silhouette Studio®: scan0006</text>
<rect x="936" y="3.6" width="8.2" height="0.9" fill="#333"/>
<path d="M970.8 2.6 h5.2 v5.1 h-5.2 z M972.6 2.6 v-1.8 h5.2 v5.1 h-1.8" fill="none" stroke="#333" stroke-width="0.9"/>
<path d="M1005 -0.5 L1013 7.6 M1013 -0.5 L1005 7.6" stroke="#333" stroke-width="0.9"/>
<!-- menu -->
<g font-size="10" fill="#1a1a1a">
<text x="3.8" y="24" textLength="13.5" lengthAdjust="spacingAndGlyphs">File</text>
<text x="28" y="24" textLength="14.8" lengthAdjust="spacingAndGlyphs">Edit</text>
<text x="53.5" y="24" textLength="18.7" lengthAdjust="spacingAndGlyphs">View</text>
<text x="83" y="24" textLength="25.4" lengthAdjust="spacingAndGlyphs">Panels</text>
<text x="119" y="24" textLength="26.4" lengthAdjust="spacingAndGlyphs">Object</text>
<text x="156" y="24" textLength="18.5" lengthAdjust="spacingAndGlyphs">Help</text>
</g>
<!-- toolbar icons -->
<g fill="#e2e2e2">
<path d="M5 33.9 H10.2 L14.7 38 V45.9 H5 Z"/>
<path d="M10.6 34.4 L14.2 38 H10.6 Z" fill="#bdbdbd"/>
<path d="M25 34 H30 L31 35 H37.5 V37.6 H28 L26 45.9 H25 Z"/>
<path d="M28.2 38.2 H40 L37.8 45.9 H26.2 Z"/>
<path d="M49 33.9 H59.5 L61 35.4 V45.9 H49 Z"/>
<rect x="50.7" y="40.3" width="8.4" height="3.8" fill="#4a4b4b"/>
<rect x="51.9" y="33.5" width="6.9" height="2.8" fill="#4a4b4b"/>
<rect x="55.6" y="33.9" width="1.5" height="2" fill="#e2e2e2"/>
<rect x="73" y="34" width="9.1" height="2.1"/>
<rect x="70.9" y="36.9" width="13.7" height="5.9" rx="0.6"/>
<rect x="73" y="41" width="9.1" height="4.3"/>
<rect x="73" y="40.6" width="9.1" height="0.8" fill="#9a9a9a"/>
<rect x="147.8" y="33.8" width="10.4" height="13.4" rx="0.5"/>
<rect x="150.4" y="32.2" width="4.8" height="2.5" rx="1"/>
<rect x="149.4" y="35.8" width="7" height="0.9" fill="#4a4b4b"/>
<rect x="149.4" y="39" width="7.2" height="0.9" fill="#4a4b4b"/>
<rect x="149.4" y="41.5" width="7.2" height="0.9" fill="#4a4b4b"/>
<rect x="149.4" y="44" width="7.2" height="0.9" fill="#4a4b4b"/>
<path d="M175 43.8 L177.6 36.3 L179 38.2 C184 35.6 189.5 37.5 191 41.6 C188 39.3 184.5 39.2 182 40.4 L183.4 43.8 Z"/>
</g>
<g fill="none" stroke="#e2e2e2">
<circle cx="310.4" cy="39" r="5.8" stroke-width="1.6"/>
<path d="M314.6 43.2 L318 46.5" stroke-width="2.2"/>
<path d="M307.6 39 H313.2 M310.4 36.2 V41.8" stroke-width="1.7"/>
<circle cx="332.9" cy="39" r="5.8" stroke-width="1.6"/>
<path d="M337.1 43.2 L340.5 46.5" stroke-width="2.2"/>
<path d="M330.1 39 H335.7" stroke-width="1.9"/>
<rect x="416.8" y="34.8" width="14.6" height="10.2" stroke-width="1.3"/>
<path d="M420.8 39.8 H427.2 M424 36.8 V42.8" stroke-width="1.2" stroke-dasharray="1.4 0.6"/>
</g>
<!-- dimmed icons -->
<g fill="none" stroke="#8e8e8e" stroke-width="1.3">
<path d="M104.8 33 L110.6 43.2 M111.2 33 L105.4 43.2"/>
<circle cx="104.6" cy="45.3" r="2.3"/>
<circle cx="110.9" cy="45.3" r="2.3"/>
</g>
<g fill="#959595">
<path d="M126.3 32.5 H136.3 V45 H134 V38.6 L129.5 34.2 H126.3 Z"/>
<path d="M124.7 35.3 H129.6 V39.3 H133.4 V46.9 H124.7 Z"/>
<path d="M130.5 35.5 L133.2 38.3 H130.5 Z"/>
<path d="M213.8 43.8 L211.2 36.3 L209.8 38.2 C204.8 35.6 199.3 37.5 197.8 41.6 C200.8 39.3 204.3 39.2 206.8 40.4 L205.4 43.8 Z"/>
</g>
<path d="M254.6 36 L262.7 43.4 M262.7 36 L254.6 43.4" stroke="#8e8e8e" stroke-width="1.3"/>
<g fill="none" stroke-width="1.2" stroke-dasharray="1.3 2.6">
<rect x="228.5" y="32.7" width="15" height="14" stroke="#e2e2e2"/>
<rect x="251.2" y="32.7" width="14.6" height="14" stroke="#8e8e8e"/>
<rect x="273.8" y="32.7" width="14.8" height="14" stroke="#e2e2e2"/>
</g>
<g fill="#e2e2e2">
<path d="M233.8 34.6 H241.2 V41.6 H238.8 V37.4 H233.8 Z"/>
<rect x="230.3" y="37.9" width="7.7" height="7.2"/>
<path d="M281 34.9 C285 34.9 286.4 37.5 286.2 39.5 C286 42.5 283.5 44.8 280 44.8 C277.4 44.8 275.7 43.6 275.7 42.2 C275.7 41 277.6 41 277.6 39.6 C277.6 38.6 276 38.8 276.2 37.6 C276.6 35.8 278.6 34.9 281 34.9 Z"/>
</g>
<g fill="#4a4b4b">
<circle cx="278.6" cy="37.3" r="0.8"/><circle cx="281" cy="36.4" r="0.8"/><circle cx="283.5" cy="37.3" r="0.8"/><circle cx="284.4" cy="39.8" r="0.8"/><circle cx="283.6" cy="42.1" r="0.8"/>
</g>
<!-- zoom select -->
<g fill="#e2e2e2">
<path d="M349.1 37.8 C349.1 34.8 351.3 32.8 354 32.8 C356.7 32.8 359 34.8 359 37.8 V38.6 C356 38.8 354 41 354 43.6 L354.6 45 C351.4 45 349.1 42.6 349.1 39.6 Z"/>
</g>
<path d="M349 38.2 H359.2 M354 32.6 V38.2" stroke="#4a4b4b" stroke-width="0.9"/>
<g fill="none" stroke="#e2e2e2">
<circle cx="357.9" cy="42.3" r="4.6" fill="#4a4b4b" stroke="none"/><circle cx="357.9" cy="42.3" r="3.6" stroke-width="1.3"/>
<path d="M360.5 44.9 L362.8 46.9" stroke-width="1.6"/>
<path d="M356.2 42.3 H359.6 M357.9 40.6 V44" stroke-width="1"/>
</g>
<!-- arrow, hand -->
<g fill="#e2e2e2">
<path d="M379 31 L385 34.9 H381.1 V38.2 H387.8 L379 47.2 L369.9 38.2 H376.2 V34.9 H373 Z"/>
<path d="M397.2 47.6 L396.5 44.4 L394.8 41.8 C394.4 41.1 395.3 40.4 396 40.9 L397.5 42.2 L397.2 35.2 C397.2 34.4 398.5 34.4 398.6 35.2 L399.2 39.8 L399.4 32.8 C399.5 32 400.8 32 400.9 32.8 L401.1 39.6 L402.4 33.3 C402.6 32.6 403.9 32.7 403.8 33.5 L403.2 40 L405.8 35 C406.2 34.3 407.4 34.6 407.1 35.4 L404.6 43.2 L403.8 47.6 Z"/>
</g>
<!-- design tabs -->
<rect x="652.2" y="29" width="93.3" height="21.3" fill="#1ebedd"/>
<rect x="745.5" y="29" width="278.5" height="21.3" fill="#177b89"/>
<rect x="652.2" y="28.5" width="371.8" height="1" fill="#3f5052" opacity="0.7"/>
<rect x="652.2" y="49.8" width="371.8" height="1" fill="#2d4a4e" opacity="0.8"/>
<rect x="668.9" y="33" width="13.8" height="13.4" rx="1.2" fill="#fff"/>
<g fill="#1ebedd">
<rect x="670.7" y="34.8" width="2.6" height="2.6"/><rect x="674.5" y="34.8" width="2.6" height="2.6"/><rect x="678.3" y="34.8" width="2.6" height="2.6"/>
<rect x="670.7" y="38.5" width="2.6" height="2.6"/><rect x="674.5" y="38.5" width="2.6" height="2.6"/><rect x="678.3" y="38.5" width="2.6" height="2.6"/>
<rect x="670.7" y="42.2" width="2.6" height="2.6"/><rect x="674.5" y="42.2" width="2.6" height="2.6"/><rect x="678.3" y="42.2" width="2.6" height="2.6"/>
</g>
<text x="689.7" y="44.4" font-size="11.3" fill="#ecfafd" textLength="37.5" lengthAdjust="spacingAndGlyphs">DESIGN</text>
<circle cx="773.6" cy="39.7" r="7.4" fill="#a9cdd2"/>
<path d="M777.6 34.2 C774.5 32.6 769.5 33.5 769.8 36.5 C770.1 39.2 776.6 38.6 776.4 42 C776.2 44.6 772.6 45.5 769 43.6" fill="none" stroke="#177b89" stroke-width="1.6"/>
<text x="788" y="44.4" font-size="11.3" fill="#a9cdd2" textLength="31.3" lengthAdjust="spacingAndGlyphs">STORE</text>
<path d="M854.1 32.4 Q854.1 31.3 855.2 31.3 H860.4 L861.6 32.8 H870.4 Q871.4 32.8 871.4 33.8 V46.1 Q871.4 47.1 870.4 47.1 H855.1 Q854.1 47.1 854.1 46.1 Z" fill="#a9cdd2"/>
<path d="M861.7 37 H864 V39.7 H866.4 L862.85 43.6 L859.3 39.7 H861.7 Z" fill="#177b89"/>
<text x="878.5" y="44.4" font-size="11.3" fill="#a9cdd2" textLength="41.4" lengthAdjust="spacingAndGlyphs">LIBRARY</text>
<g fill="#a9cdd2">
<rect x="955.5" y="33" width="17" height="3.6" rx="1.8"/>
<path d="M956.8 37 H971.2 L972.4 46.4 H955.8 Z"/>
</g>
<path d="M955.5 35 C953 35.5 952.8 38.5 955.2 39.5 M972.5 35 C975 35.5 975.2 38.5 972.8 39.5" fill="none" stroke="#a9cdd2" stroke-width="1.1"/>
<rect x="958.5" y="38.2" width="11" height="6.4" fill="#177b89" opacity="0.25"/>
<text x="979.2" y="44.4" font-size="11.3" fill="#a9cdd2" textLength="28.1" lengthAdjust="spacingAndGlyphs">SEND</text>

<!-- separators -->
<g fill="#7b7c7c">
<rect x="92.2" y="29.5" width="1.6" height="20.5"/>
<rect x="167.7" y="29.5" width="1.2" height="20.5"/>
<rect x="220.8" y="29.5" width="1.2" height="20.5"/>
<rect x="295.7" y="29.5" width="1.2" height="20.5"/>
</g>
<!-- props bar -->
<defs>
<pattern id="hatch" x="3.1" y="54.8" width="5.2" height="5.2" patternUnits="userSpaceOnUse">
<path d="M0 0 L5.2 5.2 M5.2 0 L0 5.2" stroke="#b4b4b4" stroke-width="0.9"/>
</pattern>
</defs>
<rect x="3.1" y="54.8" width="20.8" height="16.3" fill="url(#hatch)"/>
<g fill="#555">
<path d="M28.1 60.2 H33.2 L30.65 64.5 Z"/>
<path d="M66 60.2 H71.1 L68.55 64.5 Z"/>
<path d="M143 60.2 H148 L145.5 64.5 Z"/>
<path d="M195.9 60.5 L198.2 56.6 L200.5 60.5 Z" fill="#777"/>
<path d="M195.9 64 L198.2 68.4 L200.5 64 Z" fill="#777"/>
</g>
<rect x="44.7" y="59.3" width="12.6" height="7.1" fill="none" stroke="#ff3b3b" stroke-width="1.2"/>
<rect x="83.2" y="62.5" width="52.3" height="1.4" fill="#555"/>
<rect x="164.2" y="54.8" width="30.1" height="14.7" fill="#efefef"/>
<text x="167" y="66.8" font-size="9.6" fill="#4a5560" textLength="15.6" lengthAdjust="spacingAndGlyphs">0.00</text>
<text x="208.8" y="66.6" font-size="9.6" fill="#333" textLength="8.2" lengthAdjust="spacingAndGlyphs">pt</text>
<!-- doc tabs -->
<rect x="21.5" y="75" width="63.8" height="15.1" fill="#dcdcdc"/>
<rect x="85.7" y="75" width="60.4" height="15.1" fill="#fff"/>
<rect x="147.1" y="75" width="15.4" height="15.1" fill="#dcdcdc"/>
<g font-size="9.4" fill="#4e5560">
<text x="25.8" y="85.7" textLength="39.5" lengthAdjust="spacingAndGlyphs">Untitled-2</text>
<text x="89.9" y="85.7" textLength="35.9" lengthAdjust="spacingAndGlyphs">scan0006</text>
</g>
<path d="M77.2 80.3 L81.6 84.8 M81.6 80.3 L77.2 84.8 M137.3 80.3 L141.7 84.8 M141.7 80.3 L137.3 84.8" stroke="#555" stroke-width="0.9"/>
<path d="M151.8 82.5 H157.6 M154.7 79.6 V85.4" stroke="#555" stroke-width="1"/>

<!-- left tool -->
<rect x="0" y="74" width="21" height="470" fill="#fff"/>
<!--LEFT-->
<rect x="0" y="74" width="21.2" height="21.7" fill="#1fbcdc"/>
<path d="M3.9 78.3 L15.8 85.4 L11 86.6 L13.8 91.4 L11.8 92.5 L9 87.6 L6.3 90.8 Z" fill="#fff"/>
<g fill="none" stroke="#5a5a5a" stroke-width="1.2">
<path d="M8 104.8 C12 105 15.5 104 18.3 100.1"/>
<path d="M6.3 106.5 C6.4 110.5 4.5 113.5 1.3 114.4"/>
<path d="M2.6 137.6 L17 123.2" stroke-width="1.1"/>
<rect x="2.6" y="147.5" width="14.4" height="9.8" stroke="#6a6a6a" stroke-width="1.2"/>
</g>
<rect x="4.3" y="103.1" width="4" height="3.9" fill="#555"/>
<g fill="#4a4a4a">
<path d="M16.3 141.5 L20.9 137.6 V141.5 Z"/>
<path d="M16.3 163.6 L20.9 159.7 V163.6 Z"/>
<path d="M16.3 186.4 L20.9 182.1 V186.4 Z"/>
</g>
<path d="M14.5 168.6 L17.4 171.4 L6.5 182.2 L3.8 179.4 Z" fill="#5a5a5a"/>
<path d="M3.8 179.4 L6.5 182.2 L2 182.8 Z" fill="#5a5a5a"/>
<path d="M4.4 180.3 L5.6 181.5 L3.5 181.8 Z" fill="#fff"/>
<text x="2.4" y="204.7" font-family="Liberation Serif" font-size="19" fill="#606060" textLength="15.2" lengthAdjust="spacingAndGlyphs">A</text>
<path d="M13.2 224.8 L15 213.9 H5.8 L3.9 223.6" fill="none" stroke="#707070" stroke-width="1"/>
<path d="M3.8 223.5 Q1.8 223.8 2 225.3 Q2.3 226.9 4.2 226.9 H13 Q14.6 226.5 14 225" fill="none" stroke="#707070" stroke-width="1"/>
<path d="M14.8 213 L16.6 214.8 L10.3 221.2 L7.9 222 L8.6 219.6 Z" fill="#5a5a5a"/>
<path d="M11.2 236.8 Q13 235.6 15 236.3 L17.6 238.4 Q18.8 240 17.6 241.5 L9.5 249.5 Q7.8 250.8 5.8 249.8 L2.2 246.8 Q1 245 2.4 243.6 Z" fill="none" stroke="#5a5a5a" stroke-width="1.1"/>
<path d="M11.2 236.8 Q13 235.6 15 236.3 L17.6 238.4 Q18.8 240 17.6 241.5 L12 247 L6.4 241.6 Z" fill="#5a5a5a"/>
<path d="M15 257.6 L9.2 263.6" stroke="#5a5a5a" stroke-width="2.8" stroke-linecap="round"/>
<path d="M8.2 262.6 L10.2 264.6 L5 271 L3.2 273.9 L3.8 270.6 Z" fill="#5a5a5a"/>
<!--RIGHT-->
<!-- scrollbar parts -->
<rect x="993" y="74" width="12" height="12.1" fill="#4a4b4b"/>
<path d="M995 83 L999 76.3 L1003 83 Z" fill="#8a8b8b"/>
<rect x="993" y="274.4" width="11.5" height="44.4" fill="#4a4b4b"/>
<rect x="993" y="520.3" width="11.5" height="11.7" fill="#4a4b4b"/>
<path d="M995 523 L999 528.8 L1003 523 Z" fill="#8a8b8b"/>
<rect x="21" y="532" width="11.6" height="12" fill="#4a4b4b"/>
<path d="M30.5 534.2 L23.8 538 L30.5 541.8 Z" fill="#8a8b8b"/>
<rect x="419" y="532" width="176" height="12" fill="#4a4b4b"/>
<rect x="981" y="532" width="12" height="12" fill="#4a4b4b"/>
<path d="M983.5 534.2 L990.2 538 L983.5 541.8 Z" fill="#8a8b8b"/>
<rect x="993" y="532" width="31" height="12" fill="#fff"/>
<!-- right toolbar -->
<rect x="1005" y="74" width="19" height="470" fill="#fff"/>
<g fill="#6a6a6a">
<path d="M1009.9 78 H1022.7 V87.6 L1018.1 92.2 H1009.9 Z"/>
</g>
<path d="M1018.4 92.2 V87.9 H1022.7 Z" fill="#6a6a6a"/><path d="M1019.3 91.2 V88.8 H1021.7 Z" fill="#fff"/>
<rect x="1009.4" y="102.6" width="13.6" height="14.4" fill="#6a6a6a"/>
<text x="1010.8" y="112.6" font-size="8.2" fill="#e2e2e2" textLength="10.8" lengthAdjust="spacingAndGlyphs">Pix</text>
<path d="M1010.2 104.4 H1012.2 M1011.2 103.4 V105.4 M1020.2 104.4 H1022.2 M1021.2 103.4 V105.4 M1010.2 115.2 H1012.2 M1011.2 114.2 V116.2 M1020.2 115.2 H1022.2 M1021.2 114.2 V116.2" stroke="#e2e2e2" stroke-width="0.8"/>
<path d="M1016.5 127.6 C1021 127.6 1024.5 130 1024.5 134 C1024.5 138.5 1020.5 143.9 1014.5 143.9 C1011 143.9 1008.7 141.8 1008.7 139.3 C1008.7 137.3 1011.3 137.2 1011.3 135.4 C1011.3 134 1009 134 1009.3 132.2 C1010 129.4 1012.6 127.6 1016.5 127.6 Z" fill="#5e5e5e"/>
<g fill="#fff"><circle cx="1012.3" cy="132" r="1.1"/><circle cx="1015.8" cy="130.2" r="1.1"/><circle cx="1019.5" cy="131" r="1.1"/><circle cx="1021.6" cy="134.4" r="1.1"/></g>
<path d="M1008.9 154.2 H1024" stroke="#707070" stroke-width="1.7" stroke-dasharray="3.8 1.6"/>
<rect x="1008.9" y="156.9" width="15.1" height="2.2" fill="#686868"/>
<rect x="1008.9" y="161.2" width="15.1" height="4" fill="#606060"/>
<rect x="1008.1" y="175.9" width="17" height="16.4" rx="3" fill="none" stroke="#7a7a7a" stroke-width="1"/>
<path d="M1011.5 179.5 Q1013 178.5 1014.5 179.5 Q1016 178.3 1017.5 179.5 Q1019.5 178.6 1020.5 180.5 Q1021.8 182 1020.5 184 Q1021.8 186 1020.5 188 Q1019.3 189.8 1017.5 188.8 Q1016 190 1014.5 188.8 Q1013 189.8 1011.5 188.8 Q1010 187.6 1010.8 186 Q1009.8 184 1010.8 182 Q1010.2 180.2 1011.5 179.5 Z" fill="#6e6e6e"/>
<circle cx="1017" cy="210.2" r="7.8" fill="#fff" stroke="#5e5e5e" stroke-width="1.3"/>
<path d="M1017 202.4 A7.8 7.8 0 0 1 1017 218 Z" fill="#5e5e5e"/>
<text x="1008.4" y="240.7" font-family="Liberation Serif" font-size="15" fill="#5e5e5e" textLength="11" lengthAdjust="spacingAndGlyphs">A</text>
<rect x="1021" y="229.5" width="1.1" height="11.5" fill="#5e5e5e"/>
<g fill="#626262">
<rect x="1008" y="258.1" width="16" height="1"/>
<rect x="1009.4" y="253.8" width="3.4" height="9.5"/>
<rect x="1014.9" y="255.9" width="3.4" height="6.1"/>
<rect x="1020" y="252.5" width="3.6" height="13.5"/>
<ellipse cx="1016" cy="284.2" rx="7.6" ry="2.6" transform="rotate(30 1016 284.2)"/>
</g>
<path d="M1019 277 L1013 291.4" stroke="#fff" stroke-width="1.4"/>
<path d="M1018.6 277.8 L1017.6 280.2 M1014.4 288 L1013.4 290.5" stroke="#626262" stroke-width="1.6" stroke-linecap="round"/>
<rect x="1008.8" y="306.8" width="8.8" height="8.2" fill="#626262"/>
<circle cx="1019.6" cy="306.1" r="4.6" fill="#626262" stroke="#fff" stroke-width="1"/>
<rect x="1005" y="322.2" width="19" height="21.1" fill="#1fbcdc"/>
<path d="M1017.5 325.5 L1020 330.7 L1025.5 331.4 L1021.5 335.2 L1022.5 340.8 L1017.5 338 L1012.5 340.8 L1013.5 335.2 L1009.5 331.4 L1015 330.7 Z" fill="none" stroke="#fff" stroke-width="1.5" stroke-linejoin="round"/>
<path d="M1008.2 351.5 H1021.5 V362 H1019 L1016.5 364.8 L1014 362 H1008.2 Z" fill="#5e5e5e"/>
<path d="M1016.5 361.5 C1013 359 1011.6 357.4 1011.9 355.6 C1012.2 353.9 1014.5 353.5 1016.5 355.4 C1018.5 353.5 1020.8 353.9 1021.1 355.6 C1021.4 357.4 1020 359 1016.5 361.5 Z" fill="#fff" stroke="#5e5e5e" stroke-width="0.8"/>
<g fill="#5e5e5e">
<circle cx="1016" cy="376" r="1.3"/><circle cx="1012.5" cy="379.5" r="1.3"/><circle cx="1019.5" cy="379.5" r="1.3"/><circle cx="1009.3" cy="383.3" r="1.3"/><circle cx="1015.2" cy="382.5" r="1.3"/><circle cx="1022.5" cy="383.3" r="1.3"/><circle cx="1012" cy="387" r="1.3"/><circle cx="1019" cy="387" r="1.3"/><circle cx="1015.5" cy="390" r="1.3"/>
</g>
<path d="M1016.8 400.3 L1019.6 406 L1025.8 406.8 L1021.2 411 L1022.4 417 L1016.8 414 L1011.2 417 L1012.4 411 L1007.8 406.8 L1014 406 Z" fill="none" stroke="#5e5e5e" stroke-width="1.3" stroke-linejoin="round"/>
<path d="M1008.8 432.5 L1014.5 427 M1009.2 437.2 L1020 427.4 M1013 438.2 L1023 429.2" stroke="#6a6a6a" stroke-width="2.1" stroke-linecap="round"/>
<!-- gear + refresh -->
<g transform="translate(1016.6 516.7)">
<path d="M-1.6 -7 H1.6 L2 -4.8 L3.6 -4 L5.4 -5.4 L7.6 -3.2 L6.2 -1.4 L6.8 0.2 L9 0.6 V3.8 L6.8 4.2" fill="none"/>
</g>
<g fill="#3d9ad6">
<circle cx="1016.6" cy="516.7" r="5.2"/>
<g transform="translate(1016.6 516.7)">
<rect x="-1.7" y="-7.2" width="3.4" height="14.4"/>
<rect x="-1.7" y="-7.2" width="3.4" height="14.4" transform="rotate(45)"/>
<rect x="-1.7" y="-7.2" width="3.4" height="14.4" transform="rotate(90)"/>
<rect x="-1.7" y="-7.2" width="3.4" height="14.4" transform="rotate(135)"/>
</g>
</g>
<circle cx="1016.6" cy="516.7" r="2.3" fill="#fff"/>
<path d="M1016.33 529.02 A5.4 5.4 0 0 1 1022.12 533.46" fill="none" stroke="#2aaedf" stroke-width="2.3"/><path d="M1013.14 529.30 L1016.11 526.47 L1016.55 531.57 Z" fill="#2aaedf"/><path d="M1012.12 537.10 A5.4 5.4 0 0 1 1012.98 530.58" fill="none" stroke="#2a7191" stroke-width="2.3"/><path d="M1013.72 539.87 L1009.91 538.38 L1014.34 535.82 Z" fill="#2a7191"/><path d="M1021.69 536.68 A5.4 5.4 0 0 1 1014.95 539.47" fill="none" stroke="#86d2ec" stroke-width="2.3"/><path d="M1023.05 533.78 L1024.01 537.76 L1019.37 535.60 Z" fill="#86d2ec"/>
<!-- bottom left tab -->
<path d="M21 491 A9.5 16 0 0 1 21 523 Z" fill="#fff"/>
<path d="M23.3 503.2 L26.3 506 L23.3 508.8 Z" fill="#555"/>
<path d="M1.3 499 Q1.3 497.6 2.6 497.6 H7.5 L8.8 499 H16.8 Q18.3 499 18.3 500.4 V512.6 Q18.3 514 16.8 514 H2.6 Q1.3 514 1.3 512.6 Z" fill="#6a6a6a"/>
<path d="M8.8 502.5 H10.8 V505.5 H13 L9.8 509.2 L6.6 505.5 H8.8 Z" fill="#fff"/>
<!-- taskbar -->
<defs><linearGradient id="gtask" x1="0" y1="0" x2="1" y2="0"><stop offset="0" stop-color="#213c45"/><stop offset="0.5" stop-color="#20343f"/><stop offset="0.62" stop-color="#1f3142"/><stop offset="1" stop-color="#1b2843"/></linearGradient></defs><rect x="0" y="544" width="1024" height="8" fill="url(#gtask)"/>
<rect x="352.5" y="544" width="120.5" height="8" fill="#4b5d68"/>

<ellipse cx="91.2" cy="556" rx="6" ry="5.6" fill="#29b8d8"/>
<circle cx="126.6" cy="555.3" r="4" fill="#d84a3a"/>
<ellipse cx="369" cy="555" rx="4.5" ry="4.6" fill="#b8c4ca"/>
<rect x="494" y="550.5" width="3" height="2" fill="#d8a848"/>
<text x="946" y="555.6" font-size="9.4" fill="#e8e8e8" textLength="35.4" lengthAdjust="spacingAndGlyphs">12:40 PM</text>

<!-- taskbar -->

<!--TASK-->
</svg>
</body></html>
